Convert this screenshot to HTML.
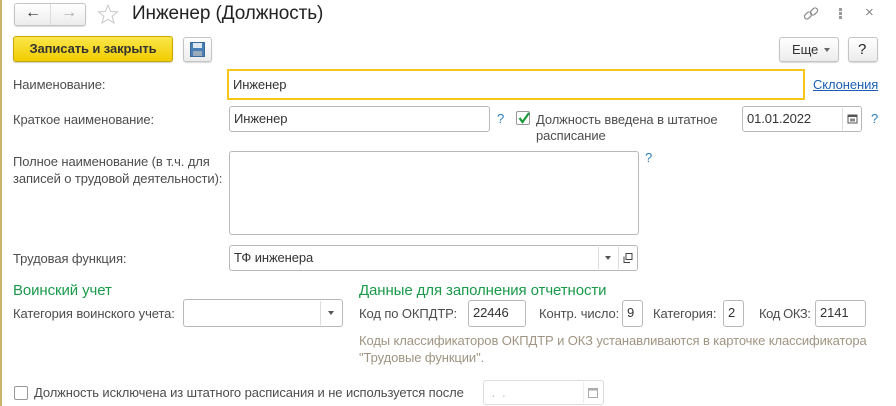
<!DOCTYPE html>
<html><head><meta charset="utf-8">
<style>
*{box-sizing:border-box;margin:0;padding:0}
body{width:896px;height:406px;background:#fff;position:relative;overflow:hidden;font-family:"Liberation Sans",Arial,sans-serif;font-size:13px;color:#4d4d4d;letter-spacing:-0.1px}
.a{position:absolute;white-space:nowrap}
.inp{position:absolute;border:1px solid #b8b8b8;border-radius:3px;background:#fff;color:#333;padding-left:4px;line-height:23px}
.btn{position:absolute;border:1px solid #c4c4c4;border-radius:3px;background:linear-gradient(#fff,#ececec);box-shadow:0 1px 1px rgba(0,0,0,.15)}
.q{position:absolute;color:#2b7fc1;font-size:13px}
.g{position:absolute;color:#1a9a4a;font-size:15px;white-space:nowrap}
</style></head><body>
<div class="a" style="left:0;top:0;width:2px;height:406px;background:#c9b66c"></div>

<div class="btn" style="left:14px;top:3px;width:72px;height:23px"></div>
<div class="a" style="left:50px;top:4px;width:1px;height:21px;background:#ddd"></div>
<div class="a" style="left:25px;top:4px;font-size:16px;color:#333;font-weight:bold">&#8592;</div>
<div class="a" style="left:61px;top:4px;font-size:16px;color:#aaa;font-weight:bold">&#8594;</div>
<svg class="a" style="left:97px;top:4px" width="22" height="20" viewBox="0 0 22 20"><polygon points="11,1 13.6,7.5 20.5,7.8 15.1,12.2 17,19 11,15.2 5,19 6.9,12.2 1.5,7.8 8.4,7.5" fill="none" stroke="#c8c8c8" stroke-width="1"/></svg>
<div class="a" style="left:132px;top:3px;font-size:19px;color:#222">Инженер (Должность)</div>

<svg class="a" style="left:802px;top:5px" width="18" height="18" viewBox="0 0 18 18"><g fill="none" stroke="#888" stroke-width="1.2"><rect x="2" y="8" width="8" height="5" rx="2.5" transform="rotate(-45 6 10.5)"/><rect x="8" y="4" width="8" height="5" rx="2.5" transform="rotate(-45 12 6.5)"/></g></svg>
<div class="a" style="left:839px;top:8px;width:3px;height:3px;background:#999;box-shadow:0 4px 0 #999,0 8px 0 #999"></div>
<div class="a" style="left:865px;top:4px;font-size:15px;color:#888">×</div>

<div class="a" style="left:13px;top:36px;width:160px;height:26px;border:1px solid #c7a700;border-radius:3px;background:linear-gradient(#fbe64a,#f0cc00);box-shadow:0 1px 1px rgba(0,0,0,.2);color:#333;font-weight:bold;text-align:center;line-height:24px">Записать и закрыть</div>
<div class="btn" style="left:183px;top:37px;width:29px;height:25px"></div>
<svg class="a" style="left:190px;top:42px" width="15" height="15" viewBox="0 0 15 15"><rect x="0.5" y="0.5" width="14" height="14" fill="#4a7fb5" stroke="#3a6a9a"/><rect x="3" y="1" width="9" height="5" fill="#dde8f3"/><rect x="3" y="9" width="9" height="5" fill="#9ab"/></svg>

<div class="btn" style="left:779px;top:37px;width:60px;height:25px"></div>
<div class="a" style="left:792px;top:42px;color:#333">Еще</div>
<div class="a" style="left:824px;top:48px;border:3px solid transparent;border-top:4px solid #666"></div>
<div class="btn" style="left:848px;top:37px;width:30px;height:25px"></div>
<div class="a" style="left:858px;top:41px;color:#222;font-size:15px">?</div>

<div class="a" style="left:13px;top:77px">Наименование:</div>
<div class="inp" style="left:227px;top:69px;width:578px;height:31px;border:2px solid #f5c518;border-radius:0;line-height:27px">Инженер</div>
<div class="a" style="left:813px;top:77px;color:#1a5fb4;text-decoration:underline">Склонения</div>

<div class="a" style="left:13px;top:112px">Краткое наименование:</div>
<div class="inp" style="left:229px;top:106px;width:261px;height:26px">Инженер</div>
<div class="q" style="left:497px;top:111px">?</div>
<div class="a" style="left:516px;top:111px;width:14px;height:14px;border:1px solid #999;border-radius:2px;background:#fff"></div>
<svg class="a" style="left:516px;top:110px" width="16" height="16" viewBox="0 0 16 16"><path d="M3.5 8 L6.5 12 L13 3" fill="none" stroke="#1a9a3a" stroke-width="2.2"/></svg>
<div class="a" style="left:536px;top:112px;line-height:16px">Должность введена в штатное<br>расписание</div>
<div class="inp" style="left:742px;top:106px;width:120px;height:26px">01.01.2022</div>
<div class="a" style="left:842px;top:108px;width:1px;height:22px;background:#ddd"></div>
<svg class="a" style="left:847px;top:113px" width="11" height="11" viewBox="0 0 11 11"><rect x="1" y="2" width="9" height="8" fill="none" stroke="#555"/><rect x="1" y="2" width="9" height="2" fill="#555"/><rect x="3" y="5.5" width="5" height="3" fill="#888"/></svg>
<div class="q" style="left:871px;top:111px">?</div>

<div class="a" style="left:13px;top:153px;line-height:17px">Полное наименование (в т.ч. для<br>записей о трудовой деятельности):</div>
<div class="inp" style="left:229px;top:151px;width:410px;height:84px"></div>
<div class="q" style="left:645px;top:150px">?</div>

<div class="a" style="left:13px;top:251px">Трудовая функция:</div>
<div class="inp" style="left:229px;top:245px;width:409px;height:26px">ТФ инженера</div>
<div class="a" style="left:598px;top:247px;width:1px;height:22px;background:#ddd"></div>
<div class="a" style="left:618px;top:247px;width:1px;height:22px;background:#ddd"></div>
<div class="a" style="left:605px;top:256px;border:3px solid transparent;border-top:4px solid #555"></div>
<svg class="a" style="left:622px;top:252px" width="12" height="12" viewBox="0 0 12 12"><rect x="4" y="1.5" width="6" height="6" fill="none" stroke="#444"/><path d="M2 4.5 V10.5 H8" fill="none" stroke="#444"/></svg>

<div class="g" style="left:13px;top:282px">Воинский учет</div>
<div class="g" style="left:359px;top:282px">Данные для заполнения отчетности</div>

<div class="a" style="left:13px;top:306px">Категория воинского учета:</div>
<div class="inp" style="left:183px;top:299px;width:160px;height:28px"></div>
<div class="a" style="left:320px;top:301px;width:1px;height:24px;background:#ddd"></div>
<div class="a" style="left:328px;top:311px;border:3px solid transparent;border-top:4px solid #555"></div>

<div class="a" style="left:359px;top:306px">Код по ОКПДТР:</div>
<div class="inp" style="left:468px;top:300px;width:58px;height:27px">22446</div>
<div class="a" style="left:539px;top:306px">Контр. число:</div>
<div class="inp" style="left:622px;top:300px;width:21px;height:27px">9</div>
<div class="a" style="left:653px;top:306px">Категория:</div>
<div class="inp" style="left:723px;top:300px;width:21px;height:27px">2</div>
<div class="a" style="left:759px;top:306px;letter-spacing:-0.4px">Код ОКЗ:</div>
<div class="inp" style="left:815px;top:300px;width:51px;height:27px">2141</div>

<div class="a" style="left:359px;top:332px;line-height:17px;color:#a09482">Коды классификаторов ОКПДТР и ОКЗ устанавливаются в карточке классификатора<br>"Трудовые функции".</div>

<div class="a" style="left:14px;top:386px;width:14px;height:14px;border:1px solid #999;border-radius:2px"></div>
<div class="a" style="left:34px;top:385px">Должность исключена из штатного расписания и не используется после</div>
<div class="inp" style="left:483px;top:380px;width:121px;height:25px;border-color:#ddd;color:#bbb">&nbsp;.&nbsp;&nbsp;.</div>
<div class="a" style="left:583px;top:382px;width:1px;height:21px;background:#eee"></div>
<svg class="a" style="left:588px;top:387px" width="10" height="11" viewBox="0 0 10 11"><rect x="0.5" y="1.5" width="9" height="9" fill="none" stroke="#aaa"/><rect x="0.5" y="1.5" width="9" height="2" fill="#aaa"/></svg>
</body></html>
